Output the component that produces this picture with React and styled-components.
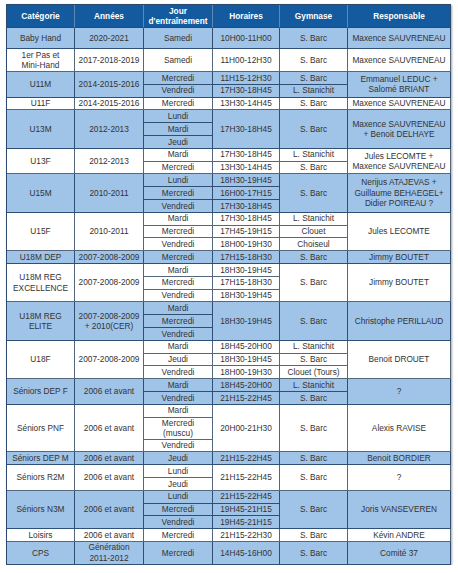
import React from "react";
import styled, { createGlobalStyle } from "styled-components";

const Global = createGlobalStyle`
  html, body { margin: 0; padding: 0; background: #fff; }
  body { font-family: "Liberation Sans", Arial, sans-serif; }
`;

const Page = styled.div`
  padding: 4px 0 0 6px;
`;

const Table = styled.table`
  width: 444px;
  table-layout: fixed;
  border-collapse: separate;
  border-spacing: 0;
  border-top: 1px solid #2c4a6e;
  border-left: 1px solid #2c4a6e;
  box-shadow: 1px 1px 2px rgba(0, 0, 0, 0.35);
  font-size: 8.3px;
  line-height: 10.5px;
  color: #333;
`;

const HeadRow = styled.tr`
  height: 23px;
`;

const HeadCell = styled.th`
  box-sizing: border-box;
  padding: 0 2px;
  background: #135a9e;
  color: #fff;
  font-weight: bold;
  text-align: center;
  vertical-align: middle;
  line-height: 10px;
  border-right: 1px solid #5f86b4;
  border-bottom: 1px solid #2c4a6e;
  &:last-child { border-right-color: #2c4a6e; }
`;

const Row = styled.tr`
  height: ${(p) => p.$h}px;
`;

const Cell = styled.td`
  box-sizing: border-box;
  padding: 0 2px;
  text-align: center;
  vertical-align: middle;
  white-space: nowrap;
  background: ${(p) => (p.$blue ? "#a0c3e8" : "#ffffff")};
  border-right: 1px solid ${(p) => (p.$blue ? "#2f4f74" : "#55677c")};
  border-bottom: 1px solid ${(p) => (p.$blue ? "#2f4f74" : "#55677c")};
`;

const S = 12.8;

const groups = [
  { c: "Baby Hand", y: "2020-2021", r: "Maxence SAUVRENEAU", b: true,
    rows: [{ j: "Samedi", t: "10H00-11H00", g: "S. Barc", h: 21 }] },
  { c: ["1er Pas et", "Mini-Hand"], y: "2017-2018-2019", r: "Maxence SAUVRENEAU", b: false,
    rows: [{ j: "Samedi", t: "11H00-12H30", g: "S. Barc", h: 23 }] },
  { c: "U11M", y: "2014-2015-2016", r: ["Emmanuel LEDUC +", "Salomé BRIANT"], b: true,
    rows: [
      { j: "Mercredi", t: "11H15-12H30", g: "S. Barc" },
      { j: "Vendredi", t: "17H30-18H45", g: "L. Stanichit" },
    ] },
  { c: "U11F", y: "2014-2015-2016", r: "Maxence SAUVRENEAU", b: false,
    rows: [{ j: "Mercredi", t: "13H30-14H45", g: "S. Barc" }] },
  { c: "U13M", y: "2012-2013", r: ["Maxence SAUVRENEAU", "+ Benoit DELHAYE"], b: true,
    rows: [
      { j: "Lundi", t: "17H30-18H45", ts: 3, g: "S. Barc", gs: 3 },
      { j: "Mardi" },
      { j: "Jeudi" },
    ] },
  { c: "U13F", y: "2012-2013", r: ["Jules LECOMTE +", "Maxence SAUVRENEAU"], b: false,
    rows: [
      { j: "Mardi", t: "17H30-18H45", g: "L. Stanichit" },
      { j: "Mercredi", t: "13H30-14H45", g: "S. Barc" },
    ] },
  { c: "U15M", y: "2010-2011", r: ["Nerijus ATAJEVAS +", "Guillaume BEHAEGEL+", "Didier POIREAU ?"], b: true,
    rows: [
      { j: "Lundi", t: "18H30-19H45", g: "S. Barc", gs: 3 },
      { j: "Mercredi", t: "16H00-17H15" },
      { j: "Vendredi", t: "17H30-18H45" },
    ] },
  { c: "U15F", y: "2010-2011", r: "Jules LECOMTE", b: false,
    rows: [
      { j: "Mardi", t: "17H30-18H45", g: "L. Stanichit" },
      { j: "Mercredi", t: "17H45-19H15", g: "Clouet" },
      { j: "Vendredi", t: "18H00-19H30", g: "Choiseul" },
    ] },
  { c: "U18M DEP", y: "2007-2008-2009", r: "Jimmy BOUTET", b: true,
    rows: [{ j: "Mercredi", t: "17H15-18H30", g: "S. Barc" }] },
  { c: ["U18M REG", "EXCELLENCE"], y: "2007-2008-2009", r: "Jimmy BOUTET", b: false,
    rows: [
      { j: "Mardi", t: "18H30-19H45", g: "S. Barc", gs: 3 },
      { j: "Mercredi", t: "17H15-18H30" },
      { j: "Vendredi", t: "18H30-19H45" },
    ] },
  { c: ["U18M REG", "ELITE"], y: ["2007-2008-2009", "+ 2010(CER)"], r: "Christophe PERILLAUD", b: true,
    rows: [
      { j: "Mardi", t: "18H30-19H45", ts: 3, g: "S. Barc", gs: 3 },
      { j: "Mercredi" },
      { j: "Vendredi" },
    ] },
  { c: "U18F", y: "2007-2008-2009", r: "Benoit DROUET", b: false,
    rows: [
      { j: "Mardi", t: "18H45-20H00", g: "L. Stanichit" },
      { j: "Jeudi", t: "18H30-19H45", g: "S. Barc" },
      { j: "Vendredi", t: "18H00-19H30", g: "Clouet (Tours)" },
    ] },
  { c: "Séniors DEP F", y: "2006 et avant", r: "?", b: true,
    rows: [
      { j: "Mardi", t: "18H45-20H00", g: "L. Stanichit" },
      { j: "Vendredi", t: "21H15-22H45", g: "S. Barc" },
    ] },
  { c: "Séniors PNF", y: "2006 et avant", r: "Alexis RAVISE", b: false,
    rows: [
      { j: "Mardi", t: "20H00-21H30", ts: 3, g: "S. Barc", gs: 3 },
      { j: ["Mercredi", "(muscu)"], h: 22 },
      { j: "Vendredi" },
    ] },
  { c: "Séniors DEP M", y: "2006 et avant", r: "Benoit BORDIER", b: true,
    rows: [{ j: "Jeudi", t: "21H15-22H45", g: "S. Barc" }] },
  { c: "Séniors R2M", y: "2006 et avant", r: "?", b: false,
    rows: [
      { j: "Lundi", t: "21H15-22H45", ts: 2, g: "S. Barc", gs: 2 },
      { j: "Jeudi" },
    ] },
  { c: "Séniors N3M", y: "2006 et avant", r: "Joris VANSEVEREN", b: true,
    rows: [
      { j: "Lundi", t: "21H15-22H45", g: "S. Barc", gs: 3 },
      { j: "Mercredi", t: "19H45-21H15" },
      { j: "Vendredi", t: "19H45-21H15" },
    ] },
  { c: "Loisirs", y: "2006 et avant", r: "Kévin ANDRE", b: false,
    rows: [{ j: "Mercredi", t: "21H15-22H30", g: "S. Barc" }] },
  { c: "CPS", y: ["Génération", "2011-2012"], r: "Comité 37", b: true,
    rows: [{ j: "Mercredi", t: "14H45-16H00", g: "S. Barc", h: 23 }] },
];

const Lines = ({ v }) =>
  Array.isArray(v)
    ? v.map((l, i) => (
        <React.Fragment key={i}>
          {i > 0 && <br />}
          {l}
        </React.Fragment>
      ))
    : v;

export default function App() {
  return (
    <>
      <Global />
      <Page>
        <Table>
          <colgroup>
            <col style={{ width: 68 }} />
            <col style={{ width: 69 }} />
            <col style={{ width: 69 }} />
            <col style={{ width: 67 }} />
            <col style={{ width: 68 }} />
            <col style={{ width: 103 }} />
          </colgroup>
          <thead>
            <HeadRow>
              <HeadCell>Catégorie</HeadCell>
              <HeadCell>Années</HeadCell>
              <HeadCell>Jour<br />d'entraînement</HeadCell>
              <HeadCell>Horaires</HeadCell>
              <HeadCell>Gymnase</HeadCell>
              <HeadCell>Responsable</HeadCell>
            </HeadRow>
          </thead>
          <tbody>
            {groups.map((gr, gi) =>
              gr.rows.map((row, ri) => (
                <Row key={`${gi}-${ri}`} $h={row.h || S}>
                  {ri === 0 && (
                    <Cell rowSpan={gr.rows.length} $blue={gr.b}>
                      <Lines v={gr.c} />
                    </Cell>
                  )}
                  {ri === 0 && (
                    <Cell rowSpan={gr.rows.length} $blue={gr.b}>
                      <Lines v={gr.y} />
                    </Cell>
                  )}
                  <Cell $blue={gr.b}>
                    <Lines v={row.j} />
                  </Cell>
                  {row.t !== undefined && (
                    <Cell rowSpan={row.ts || 1} $blue={gr.b}>
                      {row.t}
                    </Cell>
                  )}
                  {row.g !== undefined && (
                    <Cell rowSpan={row.gs || 1} $blue={gr.b}>
                      {row.g}
                    </Cell>
                  )}
                  {ri === 0 && (
                    <Cell rowSpan={gr.rows.length} $blue={gr.b}>
                      <Lines v={gr.r} />
                    </Cell>
                  )}
                </Row>
              ))
            )}
          </tbody>
        </Table>
      </Page>
    </>
  );
}
